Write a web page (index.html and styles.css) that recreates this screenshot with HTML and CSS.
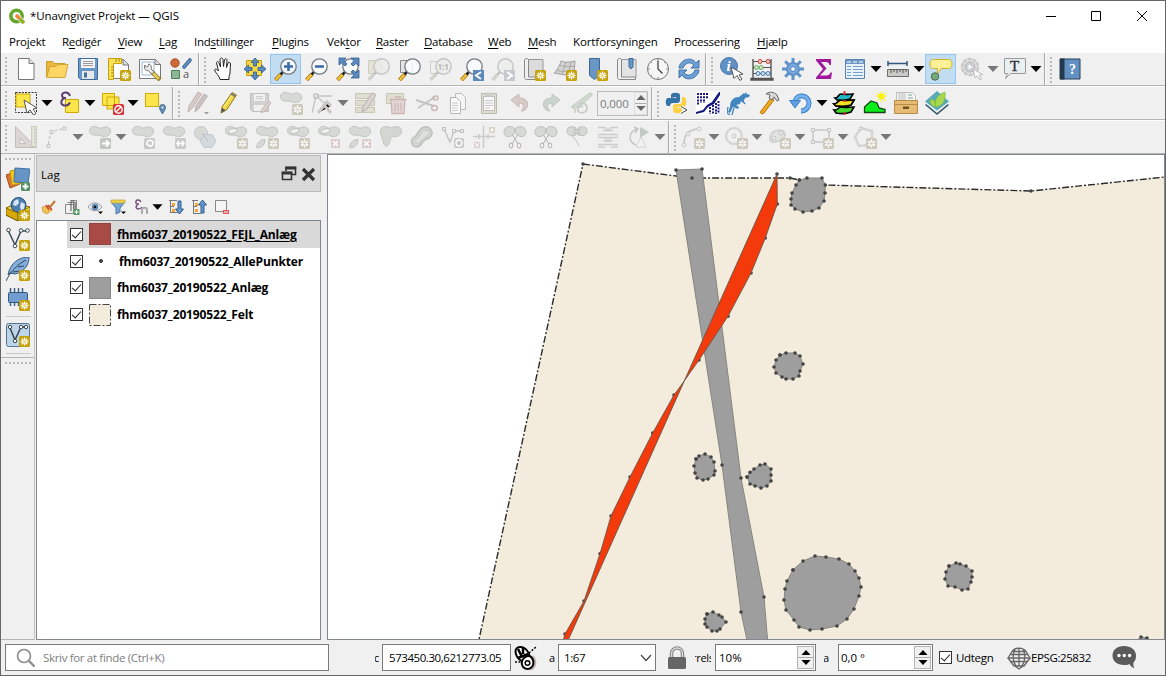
FILE: index.html
```html
<!DOCTYPE html>
<html lang="da">
<head>
<meta charset="utf-8">
<title>*Unavngivet Projekt — QGIS</title>
<link rel="stylesheet" href="styles.css">
</head>
<body>
<svg class="defs" aria-hidden="true">
  <symbol id="star" viewBox="0 0 24 24"><rect x="13" y="13" width="11" height="11" rx="1.500" fill="#c6a20a"/><path d="M18.500 14.500v8M14.500 18.500h8M15.700 15.700l5.600 5.600M21.300 15.700l-5.600 5.600" stroke="#fff" stroke-width="1.300"/><circle cx="18.500" cy="18.500" r="1.300" fill="#e8cf5a"/></symbol>
  <symbol id="gstar" viewBox="0 0 24 24"><rect x="13" y="13" width="11" height="11" rx="1.500" fill="#cdcabd"/><path d="M18.500 14.500v8M15 16.500l7 4M22 16.500l-7 4" stroke="#fff" stroke-width="1.500"/><circle cx="18.500" cy="18.500" r="1.200" fill="#cdcabd"/></symbol>
  <symbol id="blob" viewBox="0 0 24 24"><path d="M1.500 5.500C2 1 7 .5 10 2.500c2.500 1.500 4 0 6.500-.5C21 1.500 23 4 22.500 7c-.5 4-5.500 5.500-9 4-3-1.500-4.500-.5-7.500-1C3 9.500 1 8 1.500 5.500z" fill="#d6d9d6" stroke="#c2c5c2"/></symbol>
  <symbol id="ring" viewBox="0 0 24 24"><use href="#blob"/><ellipse cx="8.500" cy="6" rx="4.500" ry="2.200" fill="#f0f0f0" stroke="#bfc2bf" transform="rotate(-12 8.500 6)"/></symbol>
  <symbol id="part" viewBox="0 0 24 24"><use href="#blob"/><path d="M10 14.500c-4-.5-8 3-8.500 8 3 1 8-.5 8.500-8z" fill="#d6d9d6" stroke="#bfc2bf"/></symbol>
  <symbol id="mag" viewBox="0 0 24 24"><path d="M1.500 23l5.500-6" stroke="#a87c1a" stroke-width="4"/><path d="M1.800 22.700l5-5.500" stroke="#f6c53f" stroke-width="2.200"/><path d="M6.500 17.500l3-3" stroke="#222" stroke-width="2.500"/><circle cx="14.500" cy="9.500" r="7.700" fill="#fafcfd" fill-opacity=".85" stroke="#737b82" stroke-width="1.300"/><path d="M9.500 9a5.500 5.500 0 0 1 8-4.500" stroke="#fff" fill="none"/></symbol>
  <symbol id="gmag" viewBox="0 0 24 24"><path d="M1.500 23l5.500-6" stroke="#d4d2cc" stroke-width="3.500"/><path d="M6.500 17.500l3-3" stroke="#bbb" stroke-width="2"/><circle cx="14.500" cy="9.500" r="7.700" fill="#ececea" fill-opacity=".8" stroke="#c3c5c6" stroke-width="1.400"/></symbol>
  <symbol id="sciss" viewBox="0 0 24 24"><path d="M11.500 4C10 0 1 1 1 6.500c0 6 5 5.500 7 4.500 3-1 4-4 3.500-7zM12.500 4C14 0 23 1 23 6.500c0 6-5 5.500-7 4.500-3-1-4-4-3.500-7z" fill="#d6d9d6" stroke="#bdc0bd"/><path d="M9.500 10l5.500 9M14.500 10L9 19" stroke="#b5b2b2"/><ellipse cx="8" cy="20.500" rx="1.800" ry="2.500" fill="none" stroke="#b5acac"/><ellipse cx="16" cy="20.500" rx="1.800" ry="2.500" fill="none" stroke="#b5acac"/></symbol>
  <symbol id="arr" viewBox="0 0 12 6"><path d="M.5 0h11L6 6z" fill="currentColor"/></symbol>
  <marker id="dot" markerWidth="5" markerHeight="5" refX="2.500" refY="2.500" markerUnits="userSpaceOnUse" viewBox="0 0 5 5"><circle cx="2.500" cy="2.500" r="1.800" fill="#444"/></marker>
  <marker id="dot3" markerWidth="15" markerHeight="15" refX="2.500" refY="2.500" markerUnits="userSpaceOnUse" viewBox="0 0 5 5"><circle cx="2.500" cy="2.500" r="1.800" fill="#444"/></marker>
</svg>
<div class="window">
  <header class="titlebar">
    <svg class="logo" width="17" height="17" viewBox="0 0 17 17"><circle cx="7.500" cy="8" r="5.700" fill="none" stroke="#65a62f" stroke-width="3.600"/><path d="M8 8l7 7" stroke="#f0f0f0" stroke-width="5"/><path d="M10.500 10.500l4.500 4.500" stroke="#93b023" stroke-width="3.500"/><path d="M7 7l3.500 3.500" stroke="#f0853a" stroke-width="3.500"/></svg>
    <span class="title">*Unavngivet Projekt — QGIS</span>
    <svg class="winbtns" width="110" height="14" viewBox="0 0 110 14" fill="none" stroke="#000"><path d="M6 7.500h10M51.500 2.500h9v9h-9zM97 2l10 10M107 2L97 12"/></svg>
  </header>
  <nav class="menubar"><span>Pro<u>j</u>ekt</span><span>R<u>e</u>digér</span><span><u>V</u>iew</span><span><u>L</u>ag</span><span>Ind<u>s</u>tillinger</span><span><u>P</u>lugins</span><span>Vek<u>t</u>or</span><span><u>R</u>aster</span><span><u>D</u>atabase</span><span><u>W</u>eb</span><span><u>M</u>esh</span><span class="wide">Kortforsyningen</span><span>Processering</span><span class="wide"><u>H</u>jælp</span></nav>

  <div class="toolrow">
    <div class="group g-file">
      <b class="btn"><svg viewBox="0 0 24 24"><path d="M4.500 1.500h10.500l5 5v16H4.500z" fill="#fff" stroke="#777"/><path d="M15 1.500v5h5" fill="#ddd" stroke="#777"/></svg></b>
      <b class="btn"><svg viewBox="0 0 24 24"><path d="M1.500 20V4.500h6l2 2H20V9" fill="#edb63c" stroke="#c99f2b"/><path d="M1.500 20.500L5 9.500h6l2-2h10l-3 13z" fill="#fdd663" stroke="#cfa63c"/></svg></b>
      <b class="btn"><svg viewBox="0 0 24 24"><path d="M2.500 1.500h19v21h-17l-2-2z" fill="#6a98c9" stroke="#3d6a9c"/><path d="M5 2h14v9H5z" fill="#f4f4f4"/><path d="M7 4.500h10M7 6.500h10M7 8.500h10" stroke="#999"/><path d="M6 14h12v8H6z" fill="#e8e8e8"/><path d="M8 15.500h3v5H8z" fill="#44719f"/></svg></b>
      <b class="btn"><svg viewBox="0 0 24 24"><path d="M6.500 2.500h10l5 5v14h-15z" fill="#fff" stroke="#777"/><path d="M16 2.500V8h5.500" fill="#ddd" stroke="#777"/><path d="M1.500 1.500h13v5h-8v16h-5z" fill="#fbe05a" stroke="#c6a20a"/><path d="M4 10h3M4 13h3M4 16h3M4 19h3M9 2v3M12 2v3" stroke="#a9880b"/><use href="#star"/></svg></b>
      <b class="btn"><svg viewBox="0 0 24 24"><path d="M1.500 2.500h16l5 5v14h-21z" fill="#fff" stroke="#777"/><path d="M4 5h12v13H4z" fill="none" stroke="#9ab3cd"/><path d="M17 2.500v5h5.500" fill="#ddd" stroke="#777"/><path d="M13 14l9 9" stroke="#877015" stroke-width="4"/><path d="M14.500 15.500l6.500 6.500" stroke="#eace5b" stroke-width="2.500"/><path d="M7 8c0 2 2 2.500 3 1.500L10.500 7c2 0 3.500 2 2.500 5l3 3-2 2-4-3.500c-3 .5-4.500-3-3-5.500z" fill="#eee" stroke="#777"/></svg></b>
      <b class="btn"><svg viewBox="0 0 24 24"><circle cx="6" cy="6" r="4.200" fill="#ce6a3c" stroke="#a8502a"/><path d="M15 10l6-7" stroke="#3a6596" stroke-width="3.600" stroke-linecap="round"/><path d="M15 10l6-7" stroke="#6f9acb" stroke-width="1.500" stroke-linecap="round"/><path d="M2.500 13.500h8v8h-8z" fill="#8eb795" stroke="#4d7f58"/><text x="14" y="21" class="t-a">a</text></svg></b>
    </div>
    <div class="group g-nav">
      <b class="btn"><svg viewBox="0 0 24 24"><path d="M8 22.500c0-3-5-7-5.500-9.500 1-2 3 0 4 1L4.500 6c.5-2 2-2 2.500 0l1.500 4L8 2.500c.5-2 2.500-2 3 0l.5 7 1-6.500c.5-2 2.500-1.500 2.500.5l-.5 7L16 6c1-1.500 2.500-.5 2.500 1C18 12 18.500 17 17 19.500v3z" fill="#fff" stroke="#222" stroke-linejoin="round"/></svg></b>
      <b class="btn"><svg viewBox="0 0 24 24"><path d="M3.500 3.500h15v15h-15z" fill="#f7d842" stroke="#c6a20a"/><path d="M12 1l4 4.500h-2.500V9h-3V5.500H8zM12 23l4-4.500h-2.500V15h-3v3.500H8zM1 12l4.500-4v2.500H9v3H5.500V16zM23 12l-4.500-4v2.500H15v3h3.500V16z" fill="#5a8ac0" stroke="#2f5d8f" stroke-width=".8"/></svg></b>
      <b class="btn on"><svg viewBox="0 0 24 24"><use href="#mag"/><path d="M14.500 5v9M10 9.500h9" stroke="#3c6ea8" stroke-width="2.600"/></svg></b>
      <b class="btn"><svg viewBox="0 0 24 24"><use href="#mag"/><path d="M10 9.500h9" stroke="#3c6ea8" stroke-width="2.600"/></svg></b>
      <b class="btn"><svg viewBox="0 0 24 24"><use href="#mag"/><path d="M3 1h7L8 3.500 11 7 9 9 5.500 6 3 8zM23 1v8l-3-2.500-3 2.500-2-2 3-3.500L15 1zM23 21h-8l3-3-3-3 2-2 3 3 3-3z" fill="#5a8ac0" stroke="#2f5d8f" stroke-width=".8"/></svg></b>
      <b class="btn"><svg viewBox="0 0 24 24"><path d="M1.500 3.500h13v13h-13z" fill="#e4e3d6" stroke="#cfcdbd"/><use href="#gmag"/></svg></b>
      <b class="btn"><svg viewBox="0 0 24 24"><path d="M2.500 3.500h12v12h-12z" fill="#e6e6e6" stroke="#888"/><use href="#mag"/></svg></b>
      <b class="btn"><svg viewBox="0 0 24 24"><path d="M1.500 4.500h12v12h-12z" fill="none" stroke="#ccc"/><use href="#gmag"/><text x="8.500" y="13" class="t-one">1:1</text></svg></b>
      <b class="btn"><svg viewBox="0 0 24 24"><use href="#mag"/><path d="M13 13h11v11H13z" fill="#5b89bb"/><path d="M21 15l-5 3.500 5 3.500" fill="none" stroke="#fff" stroke-width="2"/></svg></b>
      <b class="btn"><svg viewBox="0 0 24 24"><use href="#gmag"/><path d="M13 13h11v11H13z" fill="#c6cace"/><path d="M16 15l5 3.500-5 3.500" fill="none" stroke="#fff" stroke-width="2"/></svg></b>
      <b class="btn"><svg viewBox="0 0 24 24"><path d="M6 2.500h15v18H5V4z" fill="#dcdcdc" stroke="#999"/><path d="M2.500 3c0-2 4-2 4 0v17h14v2.500h-16c-1 0-2-1-2-2z" fill="#f0f0f0" stroke="#888"/><use href="#star"/></svg></b>
      <b class="btn"><svg viewBox="0 0 24 24"><path d="M8 4c5 2 9 1 14 0l-1 14c-7 1-13-1-20-2 3-2 6-8 7-12z" fill="#d4d4d4" stroke="#a0a0a0"/><path d="M6 8c5 2 10 2 16 1M3 13c6 2 12 2 18 1M13 5l-4 12M18 5l-3 13" stroke="#a8a8a8" fill="none"/><use href="#star"/></svg></b>
      <b class="btn"><svg viewBox="0 0 24 24"><path d="M5.500 1.500h10v17l-5 4-5-4z" fill="#6a96c6" stroke="#3c6899"/><use href="#star"/></svg></b>
      <b class="btn"><svg viewBox="0 0 24 24"><path d="M6 2.500h15v18H5V4z" fill="#e3e3e3" stroke="#999"/><path d="M2.500 3c0-2 4-2 4 0v17h14v2.500h-16c-1 0-2-1-2-2z" fill="#f0f0f0" stroke="#888"/><path d="M14 1.500h4V10l-2 2-2-2z" fill="#6a96c6" stroke="#3c6899"/></svg></b>
      <b class="btn"><svg viewBox="0 0 24 24"><circle cx="12" cy="12" r="10.500" fill="#f6f6f6" stroke="#777"/><path d="M12 4v8l4.500 4.500" fill="none" stroke="#444" stroke-width="1.300"/><path d="M12 2v2M12 20v2M2 12h2M20 12h2M5 5l1 1M19 5l-1 1M5 19l1-1" stroke="#888"/></svg></b>
      <b class="btn"><svg viewBox="0 0 24 24"><path d="M2 11C3 2 15-1 19 6l3-3v8h-8l3-3c-4-4-9-2-11 3zM22 13c-1 9-13 12-17 5l-3 3v-8h8l-3 3c4 4 9 2 11-3z" fill="#6c9fd4" stroke="#3f73ab"/></svg></b>
    </div>
    <div class="group g-attr">
      <b class="btn"><svg viewBox="0 0 24 24"><circle cx="10" cy="9" r="8.500" fill="#5f90c5" stroke="#4a79ab"/><text x="7.500" y="14" class="t-i">i</text><path d="M12 10l3 11.500 3-3 3 5 2-1.500-3-4 4-1z" fill="#fff" stroke="#555"/></svg></b>
      <b class="btn"><svg viewBox="0 0 24 24"><path d="M3 2v19M21 2v19M1 21.500h22v1.500H1z" stroke="#555" fill="#888" stroke-width="1.400"/><path d="M3 4.500h18M3 10.500h18M3 16.500h18" stroke="#555"/><g fill="#f8c4be" stroke="#bb4136"><circle cx="10" cy="4.500" r="2"/><circle cx="18" cy="4.500" r="2"/></g><g fill="#d5edcb" stroke="#65a961"><circle cx="6.500" cy="10.500" r="2"/><circle cx="11" cy="10.500" r="2"/></g><g fill="#cfe1f2" stroke="#467ab0"><circle cx="8" cy="16.500" r="2"/><circle cx="13" cy="16.500" r="2"/><circle cx="18" cy="16.500" r="2"/></g></svg></b>
      <b class="btn"><svg viewBox="0 0 24 24"><path d="M12 1v22M1 12h22M4.200 4.200l15.600 15.600M19.800 4.200L4.200 19.800" stroke="#5e92c9" stroke-width="3"/><circle cx="12" cy="12" r="6" fill="#7aaade" stroke="#5e92c9" stroke-width="2"/><circle cx="12" cy="12" r="2.500" fill="#f0f0f0" stroke="#4a80ba"/></svg></b>
      <b class="btn"><svg viewBox="0 0 24 24"><path d="M4 2h15v6h-1.500c-.5-2-1.500-3-4-3H9l5.500 6.500L8 18.500h6c3 0 4-1.500 4.500-3H20l-1 6.500H4v-1.500L11 12 4 3.500z" fill="#a0189c"/></svg></b>
      <b class="btn menu"><svg viewBox="0 0 24 24"><path d="M2.500 2.500h19v19h-19z" fill="#e9f1f9" stroke="#5883b1"/><path d="M3 3h18v4H3z" fill="#6c98c8"/><path d="M4 5h4M10 5h4M16 5h4" stroke="#fff"/><path d="M4 9.500h4M4 12.500h4M4 15.500h4M4 18.500h4M10 9.500h10M10 12.500h10M10 15.500h10M10 18.500h10" stroke="#729dcc"/></svg><svg class="arr"><use href="#arr"/></svg></b>
      <b class="btn menu"><svg viewBox="0 0 24 24"><path d="M2 6.500h19M2 4v5M21 4v5" stroke="#31577f" stroke-width="1.500"/><path d="M1.500 12.500h21v7h-21z" fill="#c9c9c5" stroke="#6e6e6e"/><path d="M5 12v4M8 12v3M11 12v4M14 12v3M17 12v4M20 12v3" stroke="#555"/></svg><svg class="arr"><use href="#arr"/></svg></b>
      <b class="btn on"><svg viewBox="0 0 24 24"><path d="M5.500 2.500h13c3.500 0 4.500 1.500 4.500 4.500s-1 4.500-4.500 4.500H12L8 18l.5-6.500h-3C2 11.500 1 10 1 7s1-4.500 4.500-4.500z" fill="#fdf197" stroke="#cfae28"/><circle cx="6" cy="19.500" r="3.700" fill="#79a97b" stroke="#3f6e4c"/></svg></b>
      <b class="btn menu off"><svg viewBox="0 0 24 24"><circle cx="10" cy="10" r="8" fill="#e2e2e2" stroke="#c8c8c8" stroke-width="2.500" stroke-dasharray="4 1"/><circle cx="10" cy="10" r="5" fill="#cbcfd4" stroke="#b5b5b5"/><path d="M8.500 7.500l4 2.500-4 2.500z" fill="#fff"/><path d="M13 12l2 9 2-2 3 4 1.500-1-2-4 3-.5z" fill="#fafafa" stroke="#bbb"/></svg><svg class="arr"><use href="#arr"/></svg></b>
      <b class="btn menu"><svg viewBox="0 0 24 24"><path d="M1.500 1.500h21v15h-15l-5 5 2-5h-3z" fill="#e9f0f4" stroke="#999"/><text x="7" y="14" class="t-t">T</text></svg><svg class="arr"><use href="#arr"/></svg></b>
    </div>
    <div class="group g-help">
      <b class="btn"><svg viewBox="0 0 24 24"><path d="M2 2h20v20H2z" fill="#6390c3" stroke="#263f58"/><path d="M2 1.500h4.500v21H2z" fill="#25394d"/><text x="11" y="17" class="t-q">?</text></svg></b>
    </div>
  </div>

  <div class="toolrow">
    <div class="group g-select">
      <b class="btn menu"><svg viewBox="0 0 24 24"><path d="M1.500 1.500h21v20h-21z" fill="none" stroke="#333" stroke-dasharray="2 1.200"/><path d="M2 3h14v13H2z" fill="#fbe74c" stroke="#d0a800"/><path d="M10 9l3 13 3-3 3.500 5 2.500-1.500-3-4.500 4-1z" fill="#fff" stroke="#555"/></svg><svg class="arr"><use href="#arr"/></svg></b>
      <b class="btn menu"><svg viewBox="0 0 24 24"><path d="M8.500 8.500h13v13h-13z" fill="#fbe74c" stroke="#d0a800"/><path d="M13 5C11-.5 5 1.500 5 4.500 5 6.500 7 7 9 7 4 7 2.500 14 7 14.500c3 .5 5-1 6-3" stroke="#5d3d72" stroke-width="2" fill="none"/></svg><svg class="arr"><use href="#arr"/></svg></b>
      <b class="btn menu"><svg viewBox="0 0 24 24"><path d="M2.500 2.500h12v12h-12zM7 6h12v12H7z" fill="#fbe74c" stroke="#d0a800"/><rect x="13" y="13" width="11" height="11" rx="1.500" fill="#d8363b"/><circle cx="18.500" cy="18.500" r="3.700" fill="none" stroke="#fff" stroke-width="1.400"/><path d="M16 21l5-5" stroke="#fff" stroke-width="1.300"/></svg><svg class="arr"><use href="#arr"/></svg></b>
      <b class="btn"><svg viewBox="0 0 24 24"><path d="M2.500 2.500h13v13h-13z" fill="#fbe74c" stroke="#d0a800"/><path d="M19.500 23c-1.500-3-3-4.500-3-6.500a3 3 0 0 1 6 0c0 2-1.500 3.500-3 6.500z" fill="#648db5" stroke="#4b7399"/><circle cx="19.500" cy="16.500" r="1" fill="#fff"/></svg></b>
    </div>
    <div class="group g-edit">
      <b class="btn"><svg viewBox="0 0 24 24"><path d="M2 21l1-6L12 1l3.500 2-9 14z" fill="#d5cbc7" stroke="#c0b6b3"/><path d="M9 21l1-6 8-12 3.500 2-9 13z" fill="#cdc3c0" stroke="#bbb0ad"/><path d="M18 21h5l-2.500 2.500z" fill="#999"/></svg></b>
      <b class="btn"><svg viewBox="0 0 24 24"><path d="M4 22l1-6L15 1.500 19.500 4l-10 15z" fill="#f0d643" stroke="#8f7c26"/><path d="M7 16L16 3" stroke="#fff19a"/><path d="M4 22l1-5 3.500 2z" fill="#555"/><path d="M14 2.500l4.500 3" stroke="#777" stroke-width="2"/></svg></b>
      <b class="btn"><svg viewBox="0 0 24 24"><path d="M2.500 2.500h18v18h-16l-2-2z" fill="#d0d0d0" stroke="#c0c0c0"/><path d="M6 3h11v7H6zM6 14h10v6H6z" fill="#f0f0f0"/><path d="M8 5.500h7M8 7.500h7" stroke="#ccc"/><path d="M13 22l1-4 7-8 2 2-6 8z" fill="#ddd0cf" stroke="#c6b9b8"/></svg></b>
      <b class="btn"><svg viewBox="0 0 24 24"><use href="#blob"/><use href="#gstar"/></svg></b>
      <b class="btn menu off"><svg viewBox="0 0 24 24"><path d="M2 22L6 5h16M6 5l13 11" fill="none" stroke="#c2c2c2" stroke-width="1.300"/><path d="M4 3h4v4H4z" fill="#e8e8e8" stroke="#b0b0b0"/><path d="M8 22l9-11 4 4M21 22l-8-9" stroke="#c9c8c2" stroke-width="3"/></svg><svg class="arr"><use href="#arr"/></svg></b>
      <b class="btn"><svg viewBox="0 0 24 24"><path d="M2.500 2.500h19v5h-19zM2.500 9.500h19v5h-19zM2.500 16.500h19v5h-19z" fill="#dedfce" stroke="#c6c7b6"/><path d="M9 21l1-5L19 2l4 2-9 14z" fill="#dbd4d2" stroke="#b9b2b0"/></svg></b>
      <b class="btn"><svg viewBox="0 0 24 24"><path d="M2.500 2.500h17v10h-17z" fill="#dedfce" stroke="#c7c6b6"/><path d="M5.500 8.500h17M7 8.500l1 14h12l1-14zM11 6h6" fill="#e4d6d5" stroke="#cbb5b4" stroke-width="1.300"/><path d="M11 12v8M14 12v8M17 12v8" stroke="#c5b1b0"/></svg></b>
      <b class="btn"><svg viewBox="0 0 24 24"><path d="M1 9l18 6M3 17L20 6" stroke="#c4c4c4" stroke-width="2"/><ellipse cx="20.500" cy="7" rx="2.500" ry="2" fill="none" stroke="#c9b8b7" stroke-width="1.500"/><ellipse cx="19.500" cy="17" rx="2.800" ry="2.500" fill="none" stroke="#c9b8b7" stroke-width="1.500"/></svg></b>
      <b class="btn"><svg viewBox="0 0 24 24"><path d="M9.500 2.500h6l4 4v12h-10z" fill="#f5f5f5" stroke="#bbb"/><path d="M4.500 6.500h6l4 4v12h-10z" fill="#f8f8f8" stroke="#b5b5b5"/><path d="M6 12h6M6 14.500h6M6 17h6M6 19.500h6" stroke="#ccc"/></svg></b>
      <b class="btn"><svg viewBox="0 0 24 24"><path d="M4.500 2.500h15v20h-15z" fill="#ddddce" stroke="#b9b9ae"/><path d="M6.500 5.500h11v14h-11z" fill="#f8f8f8" stroke="#bbb"/><path d="M8.500 1.500h7v4h-7z" fill="#ccc"/><path d="M8 9.500h8M8 12h8M8 14.500h8M8 17h5" stroke="#c6c6c6"/></svg></b>
      <b class="btn"><svg viewBox="0 0 24 24"><path d="M3 9l8-6v4c7 0 10 4 8 9-1 3-4 4-6 4 4-4 3-8-2-8v4z" fill="#d8cac7" stroke="#c7b8b5"/></svg></b>
      <b class="btn"><svg viewBox="0 0 24 24"><path d="M21 9l-8-6v4C6 7 3 11 5 16c1 3 4 4 6 4-4-4-3-8 2-8v4z" fill="#cbd4cc" stroke="#bcc6bd"/></svg></b>
      <b class="btn"><svg viewBox="0 0 24 24"><path d="M2 15L19 2.500c3-1.500 4 1 2 3L8 17z" fill="#d0d8d0" stroke="#c3ccc3"/><path d="M1 16c3 0 5 2 4 6M9 13c4-2 8 0 8 4 0 5-7 6-9 3s3-6 5-4" fill="none" stroke="#c8cac3" stroke-width="1.500"/></svg></b>
      <span class="tolerance"><span>0,000</span><i class="steps"><svg class="arr up"><use href="#arr"/></svg><svg class="arr"><use href="#arr"/></svg></i></span>
    </div>
    <div class="group g-plug">
      <b class="btn"><svg viewBox="0 0 24 24"><path d="M6 7V4c0-3 9-3 9 0v5c0 2-1 3-3 3H8c-2 0-3 1-3 3H3c-3 0-3-8 0-8h8V6z" fill="#3572a5"/><path d="M17 6h2c3 0 3 9 0 10h-7v1h5v3c0 3-9 3-9 0v-4c0-2 1-3 3-3h3c2 0 3-1 3-3z" fill="#fdd045"/><path d="M16 15.500l6 3.500-6 3.500" fill="none" stroke="#fff" stroke-width="3"/><path d="M16 15.500l6 3.500-6 3.500" fill="none" stroke="#444"/></svg></b>
      <b class="btn"><svg viewBox="0 0 24 24"><path d="M0 0h24v24H0z" fill="#fff"/><path d="M2 2v12M5 2v10M8 2v10M11 2v6M14 16v7M17 14v9M20 12v11M22.500 10v13" stroke="#171780" stroke-width="2" stroke-dasharray="2 1.200"/><path d="M0 21l7-2 4-5 5-3 7-10h1v3l-6 9-6 3-4 5-8 2z" fill="#171780"/></svg></b>
      <b class="btn"><svg viewBox="0 0 24 24"><path d="M3 16C3 9 7 6 12 6l5-4 1 1 1-2 1 2 3 1-1 2-4 1-2 5-2-2-1 3-4 1 3 2-1 2-5-2-3 6-2-1 3-7-2 3z" fill="#4185be"/><path d="M15 9l3 4M1 16l-1 6 3 2M7 17l-2 7" stroke="#4185be" fill="none" stroke-width="1.300"/></svg></b>
      <b class="btn"><svg viewBox="0 0 24 24"><path d="M3 20L13 7l3 2L6 22c-2 2-5 0-3-2z" fill="#f0a91c" stroke="#b7760e"/><path d="M8 3c4-3 8-2 11 1l2 5-2 1-3-4-2 3-3-2 1-3c-1-1-3-1-4-1z" fill="#d8d8d8" stroke="#666"/></svg></b>
      <b class="btn menu"><svg viewBox="0 0 24 24"><path d="M6 10c2-8 14-6 14 2 0 4-3 8-8 8" fill="none" stroke="#3d7ecb" stroke-width="5"/><path d="M6 10c2-8 14-6 14 2 0 4-3 8-8 8" fill="none" stroke="#75b2f0" stroke-width="3"/><path d="M.5 9.500h11L6 17z" fill="#609fe3" stroke="#3d7ecb"/></svg><svg class="arr"><use href="#arr"/></svg></b>
      <b class="btn"><svg viewBox="0 0 24 24"><path d="M2 19c4 1 4-3 7-3 4 1 9 0 13 0l-3 5c-5 2-10 2-15 1zM2 13c4 0 4-4 7-4 4 1 9 0 13 0l-3 5c-5 2-10 1-15 1z" fill="#41d72d" stroke="#000" stroke-width="1.600"/><path d="M2 13c4 0 4-4 7-4 4 1 9 0 13 0l-3 5c-5 2-10 1-15 1z" fill="#f4df25" stroke="#000" stroke-width="1.600"/><path d="M3 7c4 0 3-4 6-4 4 1 9 0 12 0l-3 5c-5 2-8 1-13 1z" fill="#20b8c6" stroke="#000" stroke-width="1.600"/><path d="M12.500 0v4M12.500 9v2M12.500 21v3" stroke="#e9282c" stroke-width="1.800"/></svg></b>
      <b class="btn"><svg viewBox="0 0 24 24"><path d="M1.500 21.500V16L8 10l6 2 2 5 6 1.500v3z" fill="#08ef1a" stroke="#174417" stroke-width="1.300"/><circle cx="18.500" cy="5.500" r="3" fill="#f8f200"/><path d="M14 2l9 8M23 1l-9 9M18.500 0v11M13 5h11" stroke="#f8f200"/></svg></b>
      <b class="btn"><svg viewBox="0 0 24 24"><path d="M2.500 1.500h16l3 3V12h-19z" fill="#f6f6f6" stroke="#bbb"/><path d="M5 2v8M7 2v8M9 2v8M11 2v8" stroke="#bbb"/><path d="M14 4h4M14 7h5" stroke="#79a18d"/><path d="M.5 9.500h23v4H.5zM.5 13.500h23v9H.5z" fill="#e6bc74" stroke="#b78b45"/><path d="M9 15.500h6V18H9z" fill="#6f4e20"/></svg></b>
      <b class="btn"><svg viewBox="0 0 24 24"><path d="M0 14l12-9 12 9-12 10z" fill="#39596b"/><path d="M0 12l12-9 12 9-12 10z" fill="#edf2f3"/><path d="M0 10.500L12 0l12 10.500-12 9z" fill="#5aa9b8"/><path d="M10 16C4 14 5 9 6 8c4 1 6 4 4 8zM10 16C9 8 14 3 20 1c1 9-2 14-10 15z" fill="#a6d84f" stroke="#7cb63e" stroke-width=".6"/></svg></b>
    </div>
  </div>

  <div class="toolrow">
    <div class="group g-adv">
      <b class="btn"><svg viewBox="0 0 24 24"><path d="M1.500 1.500l21 21h-21zM6 13v5.500h5.500z" fill="#ddd5d3" stroke="#c5bdbb" fill-rule="evenodd"/><path d="M17.500 1.500h5v20h-5z" fill="#e2e2d7" stroke="#ccccc1"/><path d="M20 5h2M20 8h2M20 11h2M20 14h2M20 17h2" stroke="#bbb"/></svg></b>
      <b class="btn menu off"><svg viewBox="0 0 24 24"><path d="M3.500 19C3.500 9 9 4 19 4" fill="none" stroke="#c9c9c9" stroke-width="1.500" stroke-dasharray="3 2"/><path d="M2 19.500h3v3H2zM5 5.500h3v3H5zM18 2h3v3h-3z" fill="#eee" stroke="#c4c4c4"/></svg><svg class="arr"><use href="#arr"/></svg></b>
      <b class="btn menu off"><svg viewBox="0 0 24 24"><use href="#blob"/><rect x="12" y="13" width="11" height="11" rx="1.500" fill="#c2c5c2"/><path d="M14 18.500h7M18 15.500l3 3-3 3" fill="none" stroke="#fff" stroke-width="2"/></svg><svg class="arr"><use href="#arr"/></svg></b>
      <b class="btn"><svg viewBox="0 0 24 24"><use href="#blob"/><rect x="13" y="13" width="11" height="11" rx="1.500" fill="#c9cac9"/><path d="M16 20c-1-6 6-6 6-2s-5 4-5 1" fill="none" stroke="#fff" stroke-width="1.600"/></svg></b>
      <b class="btn"><svg viewBox="0 0 24 24"><use href="#blob"/><rect x="13" y="13" width="11" height="11" rx="1.500" fill="#c9cac9"/><path d="M15 18.500h7M17 16l-2 2.500 2 2.500M20 16l2 2.500-2 2.500" fill="none" stroke="#fff" stroke-width="1.600"/></svg></b>
      <b class="btn"><svg viewBox="0 0 24 24"><circle cx="8" cy="8" r="6.500" fill="#d6d9d6" stroke="#c4c7c4"/><path d="M11 9.500h8l4 6.500-4 6.500h-8L7 16z" fill="#d3d9de" stroke="#c0c7cd"/><path d="M9 8l6 8" stroke="#bbb"/></svg></b>
      <b class="btn"><svg viewBox="0 0 24 24"><use href="#ring"/><use href="#gstar"/></svg></b>
      <b class="btn"><svg viewBox="0 0 24 24"><use href="#part"/><use href="#gstar"/></svg></b>
      <b class="btn"><svg viewBox="0 0 24 24"><use href="#ring"/><use href="#gstar"/></svg></b>
      <b class="btn"><svg viewBox="0 0 24 24"><use href="#ring"/><path d="M14 14h9v9h-9z" fill="#dacccc"/><path d="M16 16l5 5M21 16l-5 5" stroke="#fff" stroke-width="1.500"/></svg></b>
      <b class="btn"><svg viewBox="0 0 24 24"><use href="#part"/><path d="M14 14h9v9h-9z" fill="#dacccc"/><path d="M16 16l5 5M21 16l-5 5" stroke="#fff" stroke-width="1.500"/></svg></b>
      <b class="btn"><svg viewBox="0 0 24 24"><path d="M1.500 6C2 1 8 1 11 2.500c2 1 4-1 7-1 4 0 5 4 4.500 6-1 4-5 4.500-8.500 4-3 0-2 3-3.500 6C9 22 6 23 4.500 18 4 13 1 10 1.500 6z" fill="#d4d6d1" stroke="#c2c5c0"/></svg></b>
      <b class="btn"><svg viewBox="0 0 24 24"><path d="M3 13c4-1 5-9 11-11 6-1 10 5 7 9-3 4-7 3-9 7-3 5-8 5-10 1-1-3 0-5 1-6z" fill="#d2d5d0" stroke="#bdc1bb" stroke-width="1.500"/><path d="M5 15c4-1 6-9 10-10 4 0 5 3 3 5-2 3-6 3-8 7-3 3-7 1-5-2z" fill="#dde0dc" stroke="#c7cac5"/></svg></b>
      <b class="btn"><svg viewBox="0 0 24 24"><path d="M3 4l6 13 4-11h8" fill="none" stroke="#c0c0c0" stroke-width="1.300"/><path d="M1.500 2.500h3v3h-3zM11.500 4.500h3v3h-3zM19.500 4.500h3v3h-3z" fill="#eee" stroke="#bdbdbd"/><rect x="13" y="13" width="10" height="10" rx="2" fill="#c8c8c8"/><circle cx="18" cy="18" r="3" fill="none" stroke="#fff" stroke-width="1.300"/></svg></b>
      <b class="btn"><svg viewBox="0 0 24 24"><path d="M11.500 1v22M1 11.500h22M7 9v5M16 9v5" stroke="#cacaca" stroke-width="1.500"/><path d="M17 2h6v6h-6z" fill="#d5d3c6"/><path d="M2 17h6v6H2z" fill="#dccfcf"/><path d="M3 18l4 4M7 18l-4 4M18 5h4M20 3v4" stroke="#fff"/></svg></b>
      <b class="btn"><svg viewBox="0 0 24 24"><use href="#sciss"/></svg></b>
      <b class="btn"><svg viewBox="0 0 24 24"><use href="#sciss"/></svg></b>
      <b class="btn"><svg viewBox="0 0 24 24"><path d="M11 3C8 1 2 1 2 6c0 5 5 5 9 4zM13 3c3-2 9-2 9 3 0 5-5 5-9 4z" fill="#d6d9d6" stroke="#bdc0bd"/><path d="M8 5h8M8 8h8M7 11c3 3 5 5 7 10" stroke="#bdbdbd" fill="none"/></svg></b>
      <b class="btn"><svg viewBox="0 0 24 24"><path d="M2 2.500h7M15 2.500h7M2 9.500h20M2 12.500h20M2 19.500h20M2 22h7M15 22h7M7 5.500h10M7 16h10M9 2.500l3 3 3-3M9 13l3 3 3-3" fill="none" stroke="#cbcbcb" stroke-width="1.300"/></svg></b>
      <b class="btn menu off"><svg viewBox="0 0 24 24"><path d="M9 20C1 17 1 7 10 4M7 2l4 2-3 4" fill="none" stroke="#c4c4c4" stroke-width="1.400"/><path d="M13 2l9 5-9 6z" fill="#c3c9c3"/><path d="M14 12l5 10H9z" fill="#f3f3f3" stroke="#d2d2d2"/></svg><svg class="arr"><use href="#arr"/></svg></b>
    </div>
    <div class="group g-shape">
      <b class="btn menu off"><svg viewBox="0 0 24 24"><path d="M3 19C3 9 9 4 18 4" fill="none" stroke="#cdcdcd" stroke-width="2"/><circle cx="3" cy="20" r="2" fill="#eee" stroke="#c8c8c8"/><circle cx="7" cy="9" r="2" fill="#eee" stroke="#c8c8c8"/><circle cx="18" cy="4" r="2" fill="#eee" stroke="#c8c8c8"/><use href="#gstar"/></svg><svg class="arr"><use href="#arr"/></svg></b>
      <b class="btn menu off"><svg viewBox="0 0 24 24"><circle cx="10" cy="11" r="8" fill="none" stroke="#d6d6d6" stroke-width="2.500"/><circle cx="10" cy="11" r="2" fill="#eee" stroke="#c6c6c6"/><use href="#gstar"/></svg><svg class="arr"><use href="#arr"/></svg></b>
      <b class="btn menu off"><svg viewBox="0 0 24 24"><path d="M3 13c1-7 8-9 13-7 4 3 1 9-5 10-5 2-8 1-8-3z" fill="#e2e4e2" stroke="#d0d2d0" stroke-width="2"/><circle cx="7" cy="13" r="2" fill="#eee" stroke="#c2c2c2"/><circle cx="14" cy="8" r="2" fill="#eee" stroke="#c2c2c2"/><use href="#gstar"/></svg><svg class="arr"><use href="#arr"/></svg></b>
      <b class="btn menu off"><svg viewBox="0 0 24 24"><path d="M3 5h16v12H3z" fill="none" stroke="#d2d2d2" stroke-width="2"/><path d="M1.500 3.500h3v3h-3zM17.500 3.500h3v3h-3zM1.500 15.500h3v3h-3z" fill="#eee" stroke="#c4c4c4"/><use href="#gstar"/></svg><svg class="arr"><use href="#arr"/></svg></b>
      <b class="btn menu off"><svg viewBox="0 0 24 24"><path d="M2 12l6-9 11 3v9l-4 5-9 1z" fill="none" stroke="#d4d4d4" stroke-width="2.500"/><circle cx="8" cy="3.500" r="1.500" fill="#eee" stroke="#c4c4c4"/><use href="#gstar"/></svg><svg class="arr"><use href="#arr"/></svg></b>
    </div>
  </div>

  <main class="work">
    <aside class="side">
      <div class="sidebox">
        <b class="vbtn"><svg viewBox="0 0 24 24"><path d="M0 8l9-3 5 12-10 4z" fill="#db7338" stroke="#a94c19"/><path d="M4 4l9-2 4 14-11 2z" fill="#f4c61b" stroke="#c2990c"/><path d="M9 1l15 1-2 14-14-1z" fill="#6694c4" stroke="#42719f"/><rect x="15" y="15" width="9" height="9" rx="1.500" fill="#549063"/><path d="M19.500 16.500v6M16.500 19.500h6" stroke="#fff" stroke-width="2"/></svg></b>
        <b class="vbtn"><svg viewBox="0 0 24 24"><path d="M0 11l9-4 15 3v8l-12 6-12-6z" fill="#fbe23c" stroke="#7d640a"/><circle cx="12.500" cy="8" r="7.500" fill="#4c7eb0" stroke="#274d77"/><path d="M8 4l4-2 1 4-3 3-3-1zM15 5l4 2-1 5-3 1-1-3z" fill="#d8e7f3"/><path d="M0 11l12 5v8L0 18z" fill="#d9a90c" stroke="#7d640a"/><path d="M12 16l12-6v8l-12 6z" fill="#fbe94e" stroke="#7d640a"/><use href="#star"/></svg></b>
        <b class="vbtn"><svg viewBox="0 0 24 24"><path d="M2 3l7 15 6-14h7" fill="none" stroke="#394a55" stroke-width="1.500"/><g fill="#fff" stroke="#394a55"><circle cx="2.500" cy="3" r="1.800"/><circle cx="9" cy="19" r="1.800"/><circle cx="15" cy="3.500" r="1.800"/><circle cx="21.500" cy="3.500" r="1.800"/></g><use href="#star"/></svg></b>
        <b class="vbtn"><svg viewBox="0 0 24 24"><path d="M2 18C4 6 13 0 23 0c0 7-4 15-14 17l-5-1z" fill="#83addb" stroke="#3c5a79"/><path d="M0 24C4 15 12 7 20 3M7 15l6-1M12 10l6-1" fill="none" stroke="#2b4664"/><use href="#star"/></svg></b>
        <b class="vbtn"><svg viewBox="0 0 24 24"><path d="M4.500 1v18M8.500 1v18M12.500 1v18M16.500 1v18" stroke="#3c5f85" stroke-width="1.500"/><rect x="2.500" y="5.500" width="19" height="10" rx="1" fill="#6f9dd0" stroke="#33587f"/><use href="#star"/></svg></b>
        <hr>
        <b class="vbtn last"><svg viewBox="0 0 24 24"><rect x=".5" y=".5" width="23" height="23" rx="2" fill="#bdd3e6" stroke="#557795"/><path d="M4 5l5 12L15 4h5" fill="none" stroke="#33434f" stroke-width="1.500"/><g fill="#fff" stroke="#394a55"><circle cx="4" cy="4" r="1.700"/><circle cx="9" cy="18" r="1.700"/><circle cx="15" cy="4" r="1.700"/><circle cx="20" cy="4" r="1.700"/></g><use href="#star"/></svg></b>
        <hr>
      </div>
      <div class="siderest"></div>
    </aside>
    <section class="layers">
      <div class="dockhead"><span>Lag</span><svg width="36" height="18" viewBox="0 0 36 18"><path d="M6 6V2.500h9.500v7H12" fill="none" stroke="#333" stroke-width="1.600"/><path d="M5.200 3h11" stroke="#333" stroke-width="3"/><path d="M2.500 7.500h9v7h-9z" fill="none" stroke="#333" stroke-width="1.600"/><path d="M1.700 8h10.600" stroke="#333" stroke-width="3"/><path d="M23 4l11 11M34 4l-11 11" stroke="#333" stroke-width="3.200"/></svg></div>
      <div class="docktools">
        <svg viewBox="0 0 16 16"><path d="M1 8l6-1 4 4-5 4-4-2z" fill="#f0c453" stroke="#d48a3a" stroke-width=".7"/><path d="M5 6l3 5M7 6l4 5" stroke="#cc4736" stroke-width="1.500"/><path d="M9 8l5-6" stroke="#c37d35" stroke-width="2"/></svg>
        <svg viewBox="0 0 16 16"><path d="M1.500 5.500h8v9h-8zM3.500 3.500h8v9M6 1.500h6.500v10" fill="none" stroke="#888"/><path d="M7 12V4c0-3 3-3 3 0v6" fill="none" stroke="#555"/><path d="M9.500 10h6v6h-6z" fill="#5a9b68"/><path d="M12.500 11v4M10.500 13h4" stroke="#fff"/></svg>
        <svg viewBox="0 0 16 16"><path d="M1 8c4-6 10-5 14 0-4 5-10 5-14 0z" fill="#eee" stroke="#999"/><circle cx="8" cy="8" r="3.300" fill="#5e8db8"/><circle cx="8" cy="8" r="1.300" fill="#111"/><path d="M11 12.500h5L13.500 15z"/></svg>
        <svg viewBox="0 0 16 16"><path d="M1 3l5 6v6l4-2V9l5-6z" fill="#76a4d3" stroke="#4a7cab"/><path d="M1 1h14v3H1z" fill="#efd34b" stroke="#b89b2c" stroke-width=".7"/><path d="M11 12.500h5L13.500 15z"/></svg>
        <svg viewBox="0 0 16 16"><path d="M8 3C6-.5 2 1 3 4c0 1 2 1 3 1-3 0-4 5-1 5 2 0 3 0 4-2" fill="none" stroke="#76507f" stroke-width="1.500"/><path d="M9 15v-4c0-3 5-3 5 0v4" fill="none" stroke="#aaa" stroke-width="2"/></svg>
        <svg class="arr tiny"><use href="#arr"/></svg>
        <svg viewBox="0 0 16 16"><path d="M1 1.500h8M2.500 2v12M2 7.500h4M2 13.500h8" stroke="#777"/><path d="M4 4h3v3H4zM4 10h3v3H4z" fill="#f6a632"/><path d="M10 2h3v8h2.500l-4 5-4-5H10z" fill="#6398d0" stroke="#315e8e"/></svg>
        <svg viewBox="0 0 16 16"><path d="M1 1.500h6M2.500 2v12M2 7.500h4M2 14.500h8" stroke="#777"/><path d="M4 4h3v3H4zM4 10h3v3H4z" fill="#f6a632"/><path d="M10 14h3V6h2.500l-4-5-4 5H10z" fill="#6398d0" stroke="#315e8e"/></svg>
        <svg viewBox="0 0 16 16"><path d="M1.500 1.500h11v11h-11z" fill="#f5f5f5" stroke="#888"/><path d="M9 11h6v4H9z" fill="#e05359"/><path d="M10 13h4" stroke="#fff"/></svg>
      </div>
      <div class="tree">
        <div class="layer sel"><i class="check"></i><i class="swatch red"></i><span><u>fhm6037_20190522_FEJL_Anlæg</u></span></div>
        <div class="layer"><i class="check"></i><i class="swatch point"></i><span class="shift">fhm6037_20190522_AllePunkter</span></div>
        <div class="layer"><i class="check"></i><i class="swatch grey"></i><span>fhm6037_20190522_Anlæg</span></div>
        <div class="layer"><i class="check"></i><svg class="swatch" viewBox="0 0 22 22"><path d="M.5.5h21v21H.5z" fill="#f3ebdc" stroke="#444" stroke-dasharray="7 2 2 2"/></svg><span>fhm6037_20190522_Felt</span></div>
      </div>
    </section>
    <section class="map">
      <svg viewBox="328 155 836 484" width="836" height="484">
        <path d="M583 164L676 176 692 178 790 178 799 180 825 185 860 186 1031 191 1170 176.500V660H474.500z" fill="#f3ebdc" stroke="#2b2b2b" stroke-width="1.400" stroke-dasharray="7 2 2 2"/>
        <g fill="#9e9e9e" stroke="#86867f">
          <path d="M676 170L702 169 741 478 764 597 768 645H748L741 612 722 465z" />
          <g transform="translate(660 155) scale(.33333)" class="feat">
            <path d="M418 75L441 69 486 69 496 90 495 114 492 138 477 159 456 168 429 171 405 162 393 150 393 132 396 114 408 90z"/>
            <path d="M360 600L378 594 405 594 420 603 429 627 420 648 417 663 399 672 378 672 366 666 348 654 342 636 348 615z"/>
          </g>
          <g transform="translate(540 380) scale(.33333)" class="feat">
            <path d="M468 237L477 228 495 222 513 231 522 246 525 273 522 285 504 297 489 300 471 294 465 279 462 258z"/>
            <path d="M621 291L630 277 642 267 660 255 675 252 693 267 693 285 693 303 681 318 663 324 645 318 630 312z"/>
            <path d="M501 702L519 696 537 705 546 711 558 726 540 747 531 753 516 753 501 741 495 732 495 717z"/>
          </g>
          <g transform="translate(740 420) scale(.33333)" class="feat">
            <path d="M159 450L189 423 225 408 258 411 297 417 327 432 345 453 357 474 363 501 357 528 342 567 321 597 291 618 246 627 210 630 177 621 162 600 138 570 132 540 135 507 141 483z"/>
            <path d="M627 438L648 429 660 432 678 438 696 453 696 471 693 486 684 507 666 510 645 501 624 498 615 477 618 456z"/>
            <path d="M1185 665L1203 651 1221 654 1235 668z"/>
          </g>
        </g>
        <path class="pts" d="M583 164L676 170 702 169 692 178 790 178 1031 191 722 465 741 478 764 597 741 612 777 174 777.300 204 765.300 238 751 273 728 316.300 699 360 674 395 652.700 433 630 477 611 516 600 553.700 584 601 565 634"/>
        <path d="M777 174L777.300 204 765.300 238 751 273 728 316.300 699 360 683.500 382 674 395 652.700 433 630 477 611 516 600 553.700 584 601 565 634 562 645H566z" fill="#f4390b" stroke="#66574a" stroke-width=".9"/>
      </svg>
    </section>
  </main>

  <footer class="status">
    <div class="field search"><svg width="20" height="20" viewBox="0 0 20 20"><circle cx="8" cy="8" r="6.500" fill="none" stroke="#8a8a8a" stroke-width="1.600"/><path d="M13 13l5.500 5.500" stroke="#8a8a8a" stroke-width="2.400"/></svg><span>Skriv for at finde (Ctrl+K)</span></div>
    <span class="clip c1"><span>c</span></span>
    <div class="field coord"><span>573450.30,6212773.05</span></div>
    <svg class="mouse" width="24" height="26" viewBox="0 0 24 26"><path d="M18 11c4 4 4 11-2 13" fill="none" stroke="#c4b4b4" stroke-width="3"/><path d="M8 16C2 14 0 5 3 3s10-2 13 9z" fill="#fff" stroke="#000" stroke-width="2"/><path d="M4 4l4 8M9 3v6M4 13l10-4" stroke="#000" stroke-width="2.500"/><path d="M8 16c2-5 7-6 9-4 4 4 3 11-3 12-5 0-7-4-6-8z" fill="#fff" stroke="#000" stroke-width="2"/><circle cx="13.500" cy="18" r="2.300" fill="none" stroke="#000" stroke-width="1.500"/><path d="M1 17h6M15 8l7-6" stroke="#000" stroke-dasharray="2 1.500" stroke-width="1.500"/></svg>
    <span class="clip c2">a</span>
    <div class="field scale"><span>1:67</span><svg width="12" height="8" viewBox="0 0 12 8"><path d="M1 1l5 5.500L11 1" fill="none" stroke="#444" stroke-width="1.200"/></svg></div>
    <svg class="lock" width="20" height="24" viewBox="0 0 20 24"><path d="M4.500 12V8C4.500 0 15.500 0 15.500 8v4" fill="none" stroke="#888" stroke-width="3.500"/><path d="M4.500 12V8C4.500 0 15.500 0 15.500 8v4" fill="none" stroke="#ddd" stroke-width="1.300"/><rect x="1" y="11" width="18" height="12" rx="1.500" fill="#666"/></svg>
    <span class="clip c3"><span>rrels</span></span>
    <div class="field magn"><span>10%</span><i class="steps"><svg class="arr up"><use href="#arr"/></svg><svg class="arr"><use href="#arr"/></svg></i></div>
    <span class="clip c4"><span>a</span></span>
    <div class="field rot"><span>0,0 °</span><i class="steps"><svg class="arr up"><use href="#arr"/></svg><svg class="arr"><use href="#arr"/></svg></i></div>
    <i class="check"></i><span class="draw">Udtegn</span>
    <svg class="globe" width="24" height="24" viewBox="0 0 24 24" fill="none" stroke="#666"><path d="M5 5.500C8 1 16 1 19 5.500M5 5.500L1 12h22l-4-6.500zM1 12l6 8h10l6-8M8 3.500C5 9 6 16 9 20M16 3.500c3 5.500 2 12.500-1 16.500M12 2v18M3 8.500h18M3 15.500h18M8 20l4 3 4-3" stroke-width="1.300"/></svg>
    <span class="epsg">EPSG:25832</span>
    <svg class="bubble" width="25" height="23" viewBox="0 0 25 23"><path d="M12 0C5 0 .5 4 .5 9.500S5 19 12 19c2 0 4 0 5.500-1 1 2 3 4 5 4.500-1.500-2-1-4-1-6 2-2 2.500-4 2.500-7C24 4 19 0 12 0z" fill="#5a5a5a"/><g fill="#fff"><circle cx="7" cy="9.500" r="1.700"/><circle cx="12.300" cy="9.500" r="1.700"/><circle cx="17.600" cy="9.500" r="1.700"/></g></svg>
  </footer>
</div>
</body>
</html>
```
FILE: styles.css
```css
* { box-sizing: border-box; }
body {
  margin: 0;
  width: 1166px;
  height: 676px;
  overflow: hidden;
  background: #f0f0f0;
  font-family: "Open Sans", "Noto Sans", sans-serif;
  font-size: 11.5px;
  color: #000;
}
.defs { position: absolute; width: 0; height: 0; }
.window {
  width: 1166px;
  height: 676px;
  border: 1px solid #66666a;
  display: flex;
  flex-direction: column;
}
u { text-underline-offset: 2px; text-decoration-thickness: 1px; }

.titlebar {
  height: 30px;
  background: #fff;
  display: flex;
  align-items: center;
  padding: 0 15px 0 8px;
  flex: none;
}
.title { margin-left: 4px; flex: 1; letter-spacing: -.11px; padding-bottom: 2px; }
.menubar {
  height: 21px;
  flex: none;
  background: #fff;
  display: grid;
  grid-template-columns: 53px 56px 41px 35px 78px 55px 49px 48px 64px 40px 45px 101px 83px 60px;
  align-items: center;
  padding-left: 8px;
  letter-spacing: -.25px;
  white-space: nowrap;
}
.menubar .wide { letter-spacing: -.1px; }

.toolrow {
  height: 34px;
  flex: none;
  display: flex;
  border-top: 1px solid #fff;
  border-bottom: 1px solid #b4b4b4;
}
.group {
  display: flex;
  align-items: center;
  padding-left: 9.500px;
  border-right: 1px solid #a9a9a9;
  background: repeating-linear-gradient(#b9b9b9 0 2px, #f0f0f0 2px 4px) 4px 4px / 2px 26px no-repeat;
}
.group:last-child { border-right: 0; }
.g-file { width: 198px; }
.g-nav { width: 507px; }
.g-attr { width: 339px; }
.g-select { width: 172px; }
.g-edit { width: 479px; }
.g-adv { width: 668px; }
.group + .group { border-left: 1px solid #fafafa; padding-left: 8px; }
.g-adv + .group { padding-left: 7px; }
.btn {
  width: 31px;
  height: 30px;
  flex: none;
  display: flex;
  align-items: center;
  padding-left: 3.500px;
}
.btn > svg:first-child { width: 24px; height: 24px; flex: none; }
.btn.on {
  height: 30px;
  background: #c2dcf2;
  border: 1px solid #92c7f3;
  padding-left: 2.500px;
}
.btn.menu { width: 43px; gap: 3px; }
.arr { width: 12px; height: 6px; flex: none; color: #000; }
.arr.up { transform: scaleY(-1); }
.off .arr { color: #77777b; }
.t-a { font: 11px "Open Sans", sans-serif; fill: #555; }
.t-one { font: bold 8px "Open Sans", sans-serif; fill: #b5b5b5; }
.t-i { font: italic bold 15px "Liberation Serif", serif; fill: #fff; }
.t-t { font: 15px "Liberation Serif", serif; fill: #333; stroke: #333; stroke-width: .4px; }
.t-q { font: bold 14px "Liberation Serif", serif; fill: #fff; }

.tolerance {
  width: 51px;
  height: 25px;
  border: 1px solid #bdbdbd;
  display: flex;
  align-items: center;
  justify-content: space-between;
  color: #7a7c80;
  padding-left: 2px;
  letter-spacing: -.1px;
}
.steps {
  width: 17px;
  height: 100%;
  display: grid;
  grid-template-rows: 1fr 1fr;
  place-items: center;
  background: linear-gradient(#aaa, #aaa) 0 50% / 100% 1px no-repeat #f0f0f0;
  border: 1px solid #b4b4b4;
}
.tolerance .steps { width: 13px; border-color: #ddd; }
.steps .arr { width: 10px; height: 5px; }
.tolerance .arr { color: #666; }

.work { flex: 1; min-height: 0; display: flex; }
.side { width: 34px; display: flex; flex-direction: column; border-right: 1px solid #c4c4c4; flex: none; }
.sidebox {
  height: 204px;
  border-bottom: 1px solid #b4b4b4;
  padding: 10px 0 0 5px;
  background: repeating-linear-gradient(90deg, #b9b9b9 0 2px, #f0f0f0 2px 4px) 4px 4px / 26px 2px no-repeat;
}
.vbtn { display: flex; align-items: center; height: 30px; }
.vbtn.last { height: 32px; }
.vbtn svg { width: 24px; height: 24px; }
.sidebox hr { width: 25px; margin: 2px 0; border: 0; border-top: 1px solid #c9c9c9; }
.siderest {
  flex: 1;
  border-bottom: 1px solid #b4b4b4;
  background: repeating-linear-gradient(90deg, #b9b9b9 0 2px, #f0f0f0 2px 4px) 4px 4px / 26px 2px no-repeat;
}
.layers { width: 286px; flex: none; display: flex; flex-direction: column; padding: 1px 0 0 1px; }
.dockhead {
  height: 37px;
  background: #d9d9d9;
  border: 1px solid #b9b9b9;
  display: flex;
  align-items: center;
  justify-content: space-between;
  padding: 1px 4px 0 4px;
}
.docktools { height: 28px; display: flex; align-items: center; gap: 7px; padding: 2px 0 0 5px; }
.docktools svg { width: 16px; height: 16px; flex: none; }
.docktools .tiny { width: 11px; height: 6px; margin: 0 -2px 0 -4px; }
.tree { flex: 1; border: 1px solid #82868f; background: #fff; padding-left: 30px; }
.layer {
  height: 26.800px;
  display: flex;
  align-items: center;
  padding-left: 3px;
  font-weight: bold;
  font-size: 12px;
  letter-spacing: -.13px;
  white-space: nowrap;
}
.layer.sel { background: #d9d9d9; }
.check {
  width: 13px;
  height: 13px;
  border: 1px solid #333;
  background: #fff;
  display: grid;
  place-items: center;
  flex: none;
}
.check::after {
  content: "";
  width: 8px;
  height: 4px;
  border-left: 1.300px solid #222;
  border-bottom: 1.300px solid #222;
  transform: translateY(-1px) rotate(-48deg);
}
.swatch { width: 22px; height: 22px; margin: 0 6px; flex: none; }
.red { background: #aa4a47; border: 1px solid #954441; }
.grey { background: #9e9e9e; border: 1px solid #888; }
.point { background: radial-gradient(circle at 12px 11px, #444 1.600px, transparent 2.200px); }
.shift { padding-left: 2px; }
.map { flex: 1; margin-left: 6px; border: 1px solid #82868f; background: #fff; overflow: hidden; }
.map svg { display: block; }
.pts { fill: none; stroke: none; marker: url(#dot); }
.feat path { stroke-width: 3; marker: url(#dot3); }

.status { height: 35px; flex: none; display: flex; align-items: center; white-space: nowrap; padding: 0 0 0 4px; }
.field {
  height: 27px;
  background: #fff;
  border: 1px solid #7a7a7a;
  display: flex;
  align-items: center;
  flex: none;
  padding-left: 4px;
}
.search { width: 324px; color: #7e7e7e; letter-spacing: -.33px; gap: 7px; padding-left: 10px; }
.coord { width: 129px; padding-left: 6px; letter-spacing: -.43px; }
.clip { overflow: hidden; flex: none; font-size: 11px; }
.clip span { display: inline-block; }
.c1 { width: 4px; margin: 0 3px 0 46px; }
.c1 span { transform: translateX(-1px); }
.mouse { margin-left: 3px; flex: none; }
.c2 { width: 6px; margin: 0 3px 0 11px; }
.scale { width: 98px; justify-content: space-between; padding: 0 3px 0 5px; letter-spacing: -.4px; }
.lock { margin-left: 11px; flex: none; }
.c3 { width: 16px; margin: 0 4px 0 8px; letter-spacing: -.3px; }
.c3 span { transform: translateX(-3px); }
.magn { width: 101px; justify-content: space-between; padding: 1px 1px 1px 3px; }
.c4 { width: 5px; margin: 0 9px 0 8px; }
.c4 span { transform: translateX(-1px); }
.rot { width: 95px; justify-content: space-between; padding: 1px 1px 1px 2px; }
.status > .check { margin: 0 4px 0 6px; }
.draw { letter-spacing: -.3px; width: 51px; }
.globe { flex: none; }
.epsg { width: 81px; letter-spacing: -.4px; }
.bubble { flex: none; }
```
